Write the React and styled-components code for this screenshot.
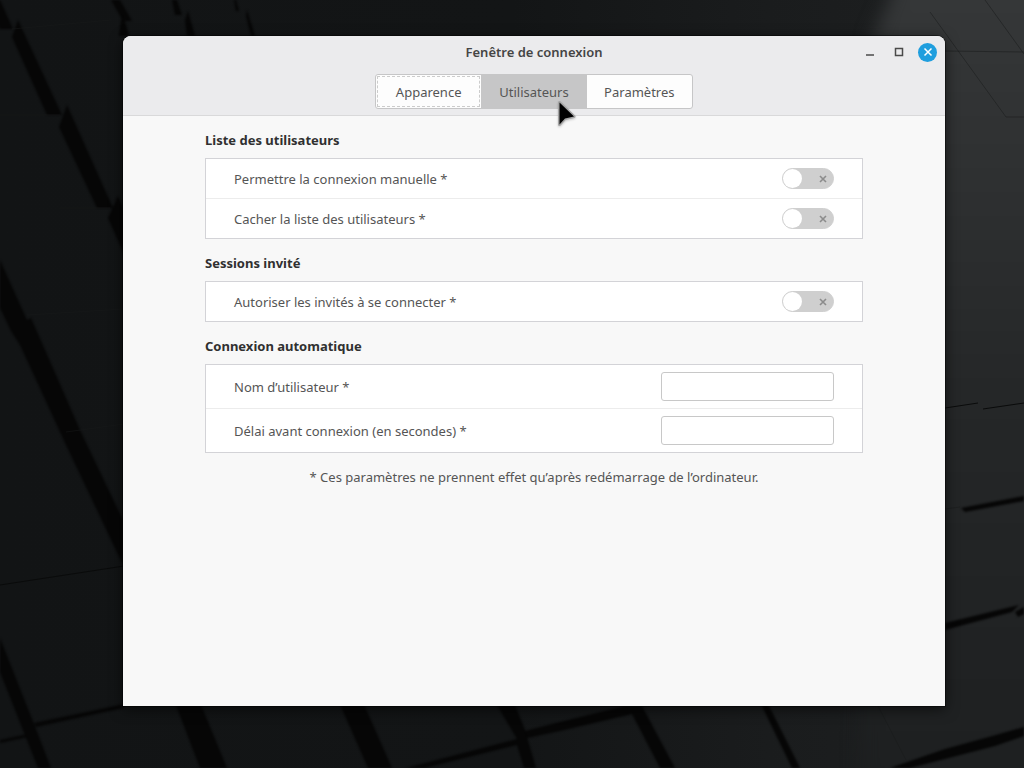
import React, { useState } from 'react'
import styled, { createGlobalStyle } from 'styled-components'

const tabs = ['Apparence', 'Utilisateurs', 'Paramètres']

function Wallpaper() {
  return (
    <Background viewBox="0 0 1024 768" preserveAspectRatio="xMidYMid slice" aria-hidden="true">
      <defs>
        <linearGradient id="base" x1="0" y1="0" x2="1" y2="0">
          <stop offset="0" stopColor="#121415" />
          <stop offset="0.5" stopColor="#131516" />
          <stop offset="0.75" stopColor="#1a1c1d" />
          <stop offset="1" stopColor="#1e2021" />
        </linearGradient>
        <linearGradient id="light" x1="0" y1="0" x2="0" y2="1">
          <stop offset="0" stopColor="#363839" />
          <stop offset="0.25" stopColor="#2e3031" />
          <stop offset="0.5" stopColor="#252728" />
          <stop offset="1" stopColor="#1d1f20" />
        </linearGradient>
        <filter id="soft" x="-20%" y="-20%" width="140%" height="140%" colorInterpolationFilters="sRGB">
          <feGaussianBlur stdDeviation="9" />
        </filter>
        <filter id="edge" colorInterpolationFilters="sRGB">
          <feGaussianBlur stdDeviation="0.8" />
        </filter>
      </defs>
      <rect width="1024" height="768" fill="url(#base)" />
      <path d="M902 -30L872 40L860 800H1060V-30z" fill="url(#light)" filter="url(#soft)" />
      <g fill="#060606" filter="url(#edge)">
        <path d="M-4 0H0L13 29H0L-4 20z" />
        <path d="M18 20L62 115H47L12 37z" />
        <path d="M67 105L113 208H97L59 127z" />
        <path d="M118 196L140 245V290L108 218z" />
        <path d="M111 0H120L132 21H123z" />
        <path d="M123 14L129 36H119L121 20z" />
        <path d="M172 0H177L182 15H175z" />
        <path d="M188 11L195 36H187L185 20z" />
        <path d="M234 0H236L239 11H236z" />
        <path d="M247 10L255 36H251L246 16z" />
        <path d="M0 260L27 320L31 318L60 384L80 430L123 520V565L66 445L20 345L11 331L0 308z" />
        <path d="M0 638L34 724L51 768H38L0 672z" />
        <path d="M34 723L124 704V708L36 727z" />
        <path d="M0 740L28 734V737L0 743z" />
        <path d="M174 700H199L227 768H200z" />
        <path d="M338 700H362L392 768H368z" />
        <path d="M494 700H513L525 730L536 768H524L517 745L425 768H406L517 739z" />
        <path d="M525 731L560 722L625 706H642L675 768H660L632 714L560 731L527 738z" />
        <path d="M759 700H766L800 768H792z" />
        <path d="M961 508L1024 496V501L965 512z" />
        <path d="M945 623L1019 605L1012 612L945 630z" />
        <path d="M1015 612L1024 607V614L1018 617z" />
        <path d="M890 768L945 749L996 735L1024 727V736L995 746L910 768z" />
      </g>
      <g fill="none" stroke="#0a0b0b">
        <path d="M0 585L124 566" />
        <path d="M945 408L978 403M983 409L1024 403" />
      </g>
      <g fill="none" stroke="#17191a" opacity="0.5">
        <path d="M945 51L1024 52M930 12L1006 117H1024M985 0L1024 54M945 509L960 507M878 706L906 760" />
        <path d="M12 29L111 20M0 115H60M60 208H110M27 315L124 309M66 432L124 424" />
      </g>
    </Background>
  )
}

function Toggle({ id }) {
  return (
    <ToggleBox>
      <Switch id={id} type="checkbox" role="switch" />
      <OffMark viewBox="0 0 8 8" aria-hidden="true">
        <path d="M1 1l6 6M7 1l-6 6" />
      </OffMark>
    </ToggleBox>
  )
}

function App() {
  const [active, setActive] = useState('Utilisateurs')

  return (
    <Desktop>
      <GlobalStyle />
      <Wallpaper />
      <Window>
        <Header>
          <TitleBar>
            <Title>Fenêtre de connexion</Title>
            <Controls>
              <WindowButton aria-label="Réduire">
                <svg width="10" height="10" viewBox="0 0 10 10"><path d="M1 8h8" /></svg>
              </WindowButton>
              <WindowButton aria-label="Agrandir">
                <svg width="10" height="10" viewBox="0 0 10 10"><path d="M1.500 1.500h7v7h-7z" /></svg>
              </WindowButton>
              <CloseButton aria-label="Fermer">
                <svg width="10" height="10" viewBox="0 0 10 10"><path d="M1.500 1.500l7 7M8.500 1.500l-7 7" /></svg>
              </CloseButton>
            </Controls>
          </TitleBar>
          <Tabs role="tablist">
            {tabs.map((tab) => (
              <Tab
                key={tab}
                role="tab"
                aria-selected={tab === active}
                $active={tab === active}
                $outlined={tab === 'Apparence'}
                onClick={() => setActive(tab)}
              >
                {tab}
              </Tab>
            ))}
            <Pointer viewBox="0 0 20 28" aria-hidden="true">
              <path d="M2.500 2.500V24.500L8 18.500L17 16.500z" />
            </Pointer>
          </Tabs>
        </Header>
        <Content>
          <Heading>Liste des utilisateurs</Heading>
          <Group>
            <Row>
              <label htmlFor="manual">Permettre la connexion manuelle *</label>
              <Toggle id="manual" />
            </Row>
            <Row>
              <label htmlFor="hide">Cacher la liste des utilisateurs *</label>
              <Toggle id="hide" />
            </Row>
          </Group>
          <Heading>Sessions invité</Heading>
          <Group>
            <Row>
              <label htmlFor="guest">Autoriser les invités à se connecter *</label>
              <Toggle id="guest" />
            </Row>
          </Group>
          <Heading>Connexion automatique</Heading>
          <Group>
            <Row $tall>
              <label htmlFor="username">Nom d’utilisateur *</label>
              <Entry id="username" type="text" />
            </Row>
            <Row $tall>
              <label htmlFor="delay">Délai avant connexion (en secondes) *</label>
              <Entry id="delay" type="text" />
            </Row>
          </Group>
          <Note>* Ces paramètres ne prennent effet qu’après redémarrage de l’ordinateur.</Note>
        </Content>
      </Window>
    </Desktop>
  )
}

export default App

const GlobalStyle = createGlobalStyle`
* {
  box-sizing: border-box;
}

body {
  margin: 0;
  background: #121415;
  color: #555555;
  font: 13px/18px "Noto Sans", "Open Sans", sans-serif;
}

button, input {
  font: inherit;
  color: inherit;
}
`

const Desktop = styled.div`
display: flex;
position: relative;
min-height: 100vh;
padding: 36px 79px 62px 123px;
`

const Background = styled.svg`
position: absolute;
inset: 0;
width: 100%;
height: 100%;
`

const Window = styled.main`
position: relative;
flex: 1;
display: flex;
flex-direction: column;
border-radius: 8px 8px 0 0;
overflow: hidden;
background: #f8f8f8;
box-shadow: 0 0 0 1px rgba(0, 0, 0, 0.4), 0 3px 14px rgba(0, 0, 0, 0.6);
`

const Header = styled.header`
display: flex;
flex-direction: column;
align-items: center;
background: #ebebed;
border-bottom: 1px solid #d9d9da;
padding-bottom: 6px;
`

const TitleBar = styled.div`
display: grid;
grid-template-columns: 1fr auto 1fr;
align-items: center;
width: 100%;
height: 32px;
margin-bottom: 6px;
padding: 0 8px;
`

const Title = styled.h1`
grid-column: 2;
margin: 0;
font-size: 13px;
font-weight: 600;
line-height: 18px;
color: #454545;
`

const Controls = styled.div`
display: flex;
justify-content: flex-end;
gap: 10px;
`

const WindowButton = styled.button`
display: grid;
place-items: center;
width: 19px;
height: 19px;
padding: 0;
border: 0;
border-radius: 50%;
background: none;

svg {
  fill: none;
  stroke: #4a4a4a;
  stroke-width: 1.500;
}
`

const CloseButton = styled(WindowButton)`
background: #1f9ede;

svg {
  stroke: #ffffff;
}
`

const Tabs = styled.div`
position: relative;
display: grid;
grid-template-columns: repeat(3, 1fr);
width: 318px;
height: 35px;
border: 1px solid #c6c6c7;
border-radius: 3px;
background: #fdfdfd;
`

const Tab = styled.button`
padding: 0;
border: 0;
background: ${(props) => (props.$active ? '#c6c6c7' : 'none')};
outline: ${(props) => (props.$outlined ? '1px dashed #cccccc' : 'none')};
outline-offset: -2px;
`

const Pointer = styled.svg`
position: absolute;
top: 25px;
left: 181px;
width: 20px;
height: 28px;
fill: #000000;
stroke: #a4a4a4;
stroke-width: 3;
stroke-linejoin: round;
paint-order: stroke;
filter: drop-shadow(0 1px 1px rgba(0, 0, 0, 0.2));
pointer-events: none;
z-index: 1;
`

const Content = styled.div`
padding: 15px 82px;
`

const Heading = styled.h2`
margin: 0 0 9px;
font-size: 13px;
font-weight: 700;
line-height: 18px;
color: #303030;
`

const Group = styled.section`
margin-bottom: 15px;
border: 1px solid #d3d3d7;
background: #ffffff;
`

const Row = styled.div`
display: flex;
align-items: center;
justify-content: space-between;
height: ${(props) => (props.$tall ? '43px' : '39px')};
padding: 0 28px;

& + & {
  box-sizing: content-box;
  border-top: 1px solid #ececec;
}
`

const ToggleBox = styled.span`
display: grid;
align-items: center;
width: 52px;
height: 21px;
`

const Switch = styled.input`
grid-area: 1 / 1;
appearance: none;
display: flex;
width: 52px;
height: 21px;
margin: 0;
border: 1px solid #cfcfcf;
border-radius: 11px;
background: #cfcfcf;

&::before {
  content: "";
  width: 19px;
  height: 19px;
  border-radius: 50%;
  background: #ffffff;
}

&:checked {
  justify-content: flex-end;
  background: #1f9ede;
}
`

const OffMark = styled.svg`
grid-area: 1 / 1;
justify-self: end;
width: 8px;
height: 8px;
margin-right: 7px;
fill: none;
stroke: #8c8c8c;
stroke-width: 1.600;
pointer-events: none;
`

const Entry = styled.input`
width: 173px;
height: 29px;
padding: 0 8px;
border: 1px solid #c8c8c8;
border-radius: 3px;
background: #ffffff;
outline: none;
`

const Note = styled.p`
margin: 0;
text-align: center;
`
